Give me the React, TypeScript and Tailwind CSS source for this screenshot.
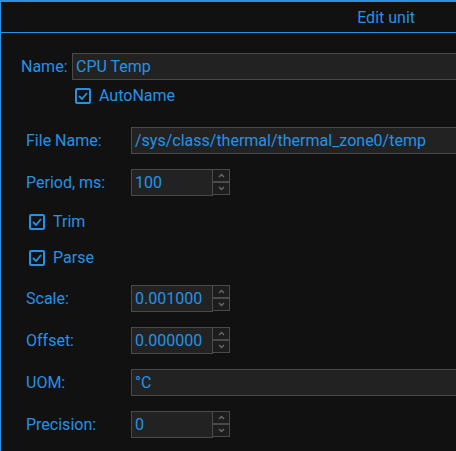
import React from "react";

const BLUE = "text-[#2592e6]";

function Check() {
  return (
    <div className="w-4 h-4 border-2 border-[#2592e6] rounded-[2px] flex items-center justify-center box-border">
      <svg width="10" height="8" viewBox="0 0 10 8">
        <path d="M1 4 L4 7 L9 1" fill="none" stroke="#2592e6" strokeWidth="1.8" />
      </svg>
    </div>
  );
}

function Spin({ value }: { value: string }) {
  return (
    <div className="flex h-[27px]">
      <div className={`w-[82px] h-[27px] border border-[#4a4a4a] bg-[#222] pl-[3px] flex items-center ${BLUE}`}>
        {value}
      </div>
      <div className="flex flex-col justify-between w-[18px] h-[26px] ml-[-1px]">
        <div className="h-[13px] border border-[#4a4a4a] bg-[#1d1d1d] flex items-center justify-center">
          <svg width="7" height="5" viewBox="0 0 7 5">
            <path d="M1 4 L3.5 1.5 L6 4" fill="none" stroke="#6a6a6a" strokeWidth="1.3" />
          </svg>
        </div>
        <div className="h-[13px] border border-[#4a4a4a] bg-[#1d1d1d] flex items-center justify-center">
          <svg width="7" height="5" viewBox="0 0 7 5">
            <path d="M1 1 L3.5 3.5 L6 1" fill="none" stroke="#6a6a6a" strokeWidth="1.3" />
          </svg>
        </div>
      </div>
    </div>
  );
}

function Wide({ value }: { value: string }) {
  return (
    <div className={`flex-1 h-[27px] border-y border-l border-[#4a4a4a] bg-[#222] pl-[3px] flex items-center ${BLUE}`}>
      {value}
    </div>
  );
}

function Row({ label, children, mt }: { label: string; children: React.ReactNode; mt: string }) {
  return (
    <div className={`flex items-center h-[27px] pl-[5px] ${mt}`}>
      <div className="w-[105px] shrink-0">{label}</div>
      {children}
    </div>
  );
}

export default function App() {
  return (
    <div
      className={`w-[456px] h-[451px] bg-[#111] border-l border-t-2 border-[#2592e6] overflow-hidden text-[16px] ${BLUE}`}
      style={{ fontFamily: "Roboto, sans-serif" }}
    >
      <div className="h-[31px] flex items-center justify-end pr-[41px] pt-[1px] border-b border-[#2592e6]">
        Edit unit
      </div>
      <div className="pl-[20px] pt-[20px]">
        <div className="flex items-center h-[27px]">
          <div className="w-[51px] shrink-0">Name:</div>
          <Wide value="CPU Temp" />
        </div>
        <div className="flex items-center mt-[8px] ml-[54px] h-4 gap-2">
          <Check />
          <span>AutoName</span>
        </div>
        <Row label="File Name:" mt="mt-[23px]">
          <Wide value="/sys/class/thermal/thermal_zone0/temp" />
        </Row>
        <Row label="Period, ms:" mt="mt-[15px]">
          <Spin value="100" />
        </Row>
        <div className="flex items-center mt-[18px] ml-[8px] h-4 gap-2">
          <Check />
          <span>Trim</span>
        </div>
        <div className="flex items-center mt-[20px] ml-[8px] h-4 gap-2">
          <Check />
          <span>Parse</span>
        </div>
        <Row label="Scale:" mt="mt-[19px]">
          <Spin value="0.001000" />
        </Row>
        <Row label="Offset:" mt="mt-[15px]">
          <Spin value="0.000000" />
        </Row>
        <Row label="UOM:" mt="mt-[15px]">
          <Wide value="°C" />
        </Row>
        <Row label="Precision:" mt="mt-[15px]">
          <Spin value="0" />
        </Row>
      </div>
    </div>
  );
}
